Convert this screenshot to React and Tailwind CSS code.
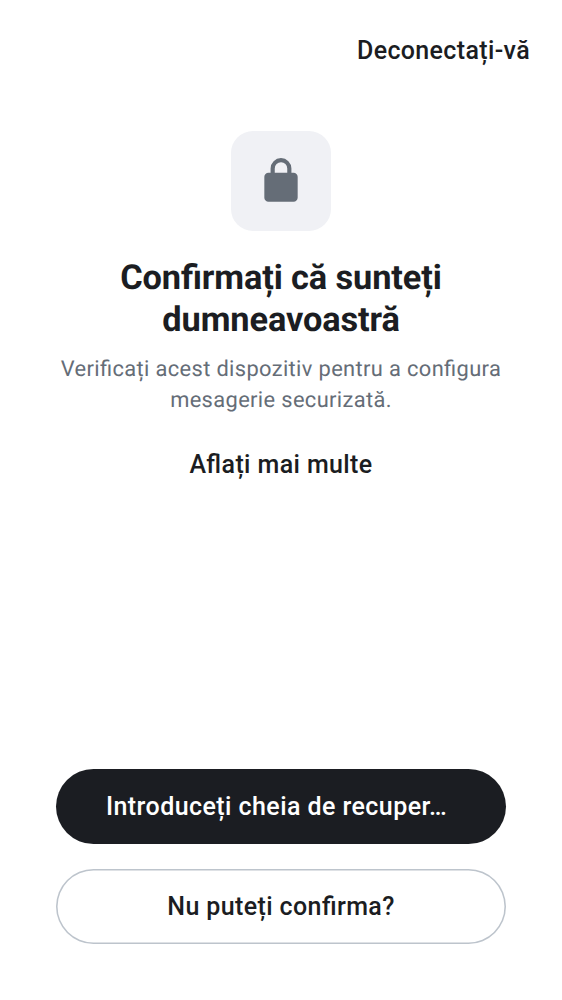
export default function App() {
  return (
    <main className="flex h-[1000px] w-full flex-col bg-white font-['Roboto',sans-serif] font-medium text-[#1b1d22] antialiased [font-feature-settings:'liga'_1] [text-rendering:geometricPrecision]">
      <header className="flex h-[100px] items-center justify-end pr-8">
        <button className="text-[25px] leading-[31px] tracking-[0.36px]">Deconectați-vă</button>
      </header>
      <section className="flex flex-col items-center pt-[31px] text-center">
        <div className="flex size-[100px] items-center justify-center rounded-[22px] bg-[#f0f1f5]">
          <svg viewBox="0 0 24 24" className="size-[50px]" fill="#656d77">
            <path d="M6 22q-.824 0-1.412-.587A1.93 1.93 0 0 1 4 20V10q0-.825.588-1.412A1.93 1.93 0 0 1 6 8h1V6q0-2.075 1.463-3.537Q9.926 1 12 1t3.537 1.463T17 6v2h1q.824 0 1.413.588Q20 9.175 20 10v10q0 .824-.587 1.413A1.93 1.93 0 0 1 18 22zM9 8h6V6q0-1.25-.875-2.125A2.9 2.9 0 0 0 12 3q-1.25 0-2.125.875A2.9 2.9 0 0 0 9 6z" />
          </svg>
        </div>
        <h1 className="mt-[26px] text-[34.375px] leading-[42px] font-bold tracking-[-0.12px]">Confirmați că sunteți<br />dumneavoastră</h1>
        <p className="mt-[13px] text-[21.875px] leading-[31px] font-normal tracking-[0.36px] text-[#656d77]">Verificați acest dispozitiv pentru a configura<br />mesagerie securizată.</p>
        <button className="mt-[33px] text-[25px] leading-[31px] tracking-[0.39px]">Aflați mai multe</button>
      </section>
      <footer className="mt-auto flex flex-col gap-[25px] px-14 pb-14 text-[25px] leading-[31px] tracking-[0.39px]">
        <button className="h-[75px] rounded-full bg-[#1b1d22] pl-[50px] text-left tracking-[0.43px] text-white">Introduceți cheia de recuper…</button>
        <button className="h-[75px] rounded-full shadow-[inset_0_0_0_1.56px_#bdc4cc]">Nu puteți confirma?</button>
      </footer>
    </main>
  );
}
